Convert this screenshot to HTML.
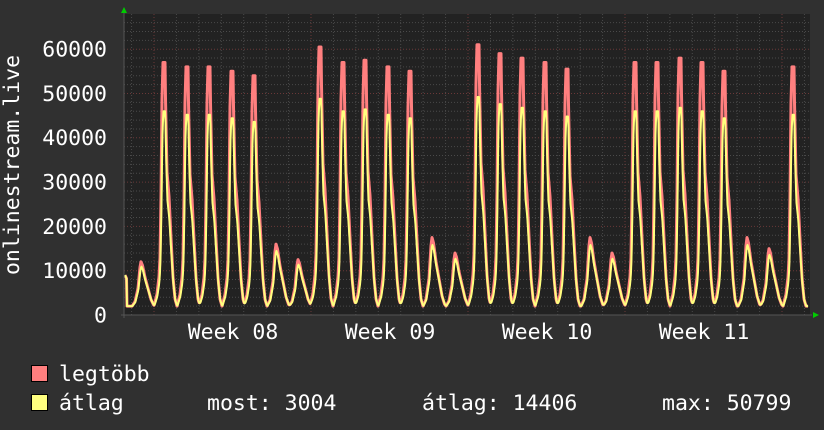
<!DOCTYPE html>
<html><head><meta charset="utf-8"><style>
html,body{margin:0;padding:0;background:#303030;}
svg{display:block;}
text{font-family:"DejaVu Sans Mono","Liberation Mono",monospace;font-size:21.5px;fill:#fff;}
</style></head><body>
<svg id="g" width="824" height="430" xmlns="http://www.w3.org/2000/svg">
<rect x="0" y="0" width="824" height="430" fill="#303030"/>
<rect x="124" y="14" width="686" height="301" fill="#222222"/>
<g id="grid"></g>
<g id="data"></g>
<line x1="121" y1="315" x2="812" y2="315" stroke="#555" stroke-width="1"/>
<line x1="124" y1="12" x2="124" y2="318" stroke="#555" stroke-width="1"/>
<polygon points="121,13 127,13 124,7" fill="#00cc00"/>
<polygon points="813,312 813,318 819,315" fill="#00cc00"/>
<text x="107" y="56.5" text-anchor="end">60000</text>
<text x="107" y="101" text-anchor="end">50000</text>
<text x="107" y="145" text-anchor="end">40000</text>
<text x="107" y="189.5" text-anchor="end">30000</text>
<text x="107" y="234" text-anchor="end">20000</text>
<text x="107" y="278" text-anchor="end">10000</text>
<text x="107" y="322.5" text-anchor="end">0</text>
<text transform="translate(19,165) rotate(-90)" text-anchor="middle">onlinestream.live</text>
<text x="233" y="339" text-anchor="middle">Week 08</text>
<text x="390" y="339" text-anchor="middle">Week 09</text>
<text x="547" y="339" text-anchor="middle">Week 10</text>
<text x="704" y="339" text-anchor="middle">Week 11</text>
<rect x="31.5" y="365.5" width="16" height="16" fill="#ff7f7f" stroke="#000"/>
<rect x="31.5" y="394.5" width="16" height="16" fill="#ffff7f" stroke="#000"/>
<text x="59" y="381">legtöbb</text>
<text x="59" y="410">átlag</text>
<text x="207" y="410">most: 3004</text>
<text x="422" y="410">átlag: 14406</text>
<text x="662" y="410">max: 50799</text>
</svg>
<script>
var NS="http://www.w3.org/2000/svg";
function el(p,t,a){var e=document.createElementNS(NS,t);for(var k in a)e.setAttribute(k,a[k]);p.appendChild(e);return e;}
var grid=document.getElementById("grid");
function Y(v){return 315-v*0.00443;}
for(var v=2000;v<=66000;v+=2000){var y=Y(v);if(y<14)break;
 var maj=v%10000==0;
 el(grid,"line",{x1:124,x2:810,y1:y,y2:y,stroke:maj?"#6a3838":"#4a4a4a","stroke-dasharray":"1,2","stroke-width":1});}
for(var k=-2;k<40;k++){var x=154+k*157/7;if(x<=124||x>=810)continue;
 var maj=(k%7==0);
 el(grid,"line",{x1:x,x2:x,y1:14,y2:315,stroke:maj?"#6a3838":"#4a4a4a","stroke-dasharray":"1,2","stroke-width":1});}
var peaks=[[141,12000,0],[163,57000,1],[186,56000,1],[208,56000,1],[231,55000,1],[253,54000,1],[276,16000,0],[298,12500,0],
[319,60500,1],[342,57000,1],[364,57500,1],[387,56000,1],[409,55000,1],[432,17500,0],[455,14000,0],
[477,61000,1],[499,59000,1],[521,58000,1],[544,57000,1],[566,55500,1],[590,17500,0],[612,14000,0],
[634,57000,1],[656,57000,1],[679,58000,1],[701,57000,1],[723,55000,1],[747,17500,0],[769,15000,0],[792,56000,1]];
var W=[[-9,0],[-6,0.05],[-4,0.12],[-3,0.2],[-2,0.45],[-1,0.85],[0,1],[2,1],[2.5,0.85],[4,0.55],[6,0.45],[8,0.28],[10,0.12],[12,0.03],[14,0]];
var E=[[-9,0],[-6,0.1],[-3,0.4],[-1,0.88],[0,1],[1.5,0.92],[4,0.65],[7,0.4],[10,0.15],[12.5,0.03],[14,0]];
function interp(t,T){if(t<=T[0][0]||t>=T[T.length-1][0])return 0;
 for(var i=1;i<T.length;i++){if(t<=T[i][0]){var a=T[i-1],b=T[i];return a[1]+(b[1]-a[1])*(t-a[0])/(b[0]-a[0]);}}return 0;}
function val(x,avg){var v=2000;for(var i=0;i<peaks.length;i++){var p=peaks[i];var amp=p[1]-2000;
 if(avg)amp*=p[2]?0.8:0.9;
 v+=amp*interp(x-p[0]+(avg?-0.3:0),p[2]?W:E);}return v;}
var d=document.getElementById("data");
function path(avg){var s="";for(var x=125;x<=808;x+=0.5){var v=val(x,avg);if(x<127)v=9000-(x-125)*500;s+=(s?"L":"M")+x+","+Y(v).toFixed(1);}return s;}
el(d,"path",{d:path(false),fill:"none",stroke:"#ff7f7f","stroke-width":3,"stroke-linejoin":"round"});
el(d,"path",{d:path(true),fill:"none",stroke:"#ffff7f","stroke-width":2,"stroke-linejoin":"round"});
</script>
</body></html>
